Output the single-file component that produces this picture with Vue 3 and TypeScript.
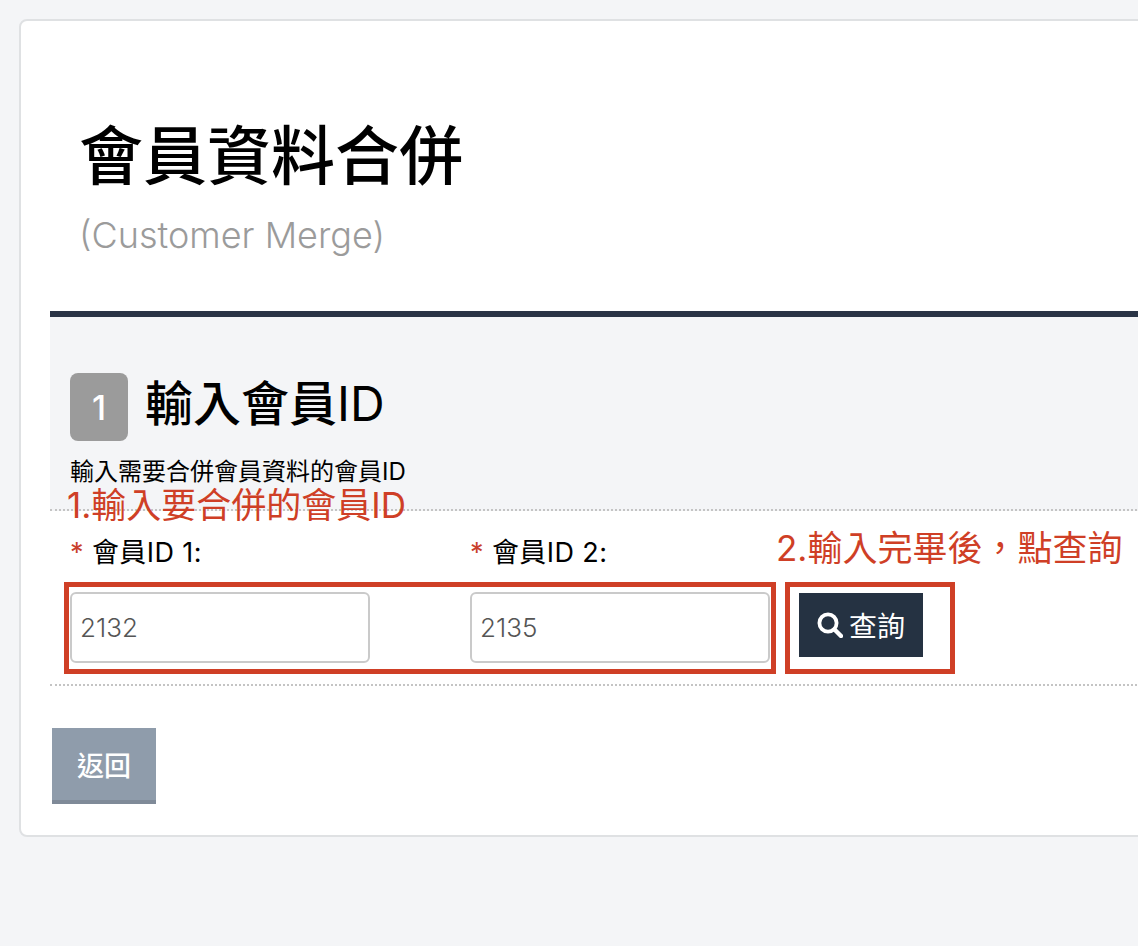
<script setup lang="ts">
const fields = [
  { label: '會員ID 1:', value: '2132' },
  { label: '會員ID 2:', value: '2135' },
]
</script>

<template>
  <div class="page">
    <main class="card">
      <header class="head">
        <h1>會員資料合併</h1>
        <p class="sub">(Customer Merge)</p>
      </header>

      <section class="panel">
        <div class="step">
          <span class="badge">1</span>
          <h2>輸入會員<span class="latin">ID</span></h2>
        </div>
        <p class="desc">輸入需要合併會員資料的會員ID</p>
        <span class="note note-one">1.輸入要合併的會員ID</span>
      </section>

      <form class="query" @submit.prevent>
        <div class="field" v-for="f in fields" :key="f.label">
          <label><i>*</i>{{ f.label }}</label>
          <input type="text" :value="f.value" />
        </div>
        <button class="search" type="button">
          <svg width="26" height="26" viewBox="0 0 26 26" aria-hidden="true">
            <circle cx="11" cy="11" r="8.6" fill="none" stroke="#fff" stroke-width="3.8" />
            <path d="M17.5 17.5 L24 24" stroke="#fff" stroke-width="4.4" stroke-linecap="round" />
          </svg>
          <span>查詢</span>
        </button>
        <span class="note note-two">2.輸入完畢後，點查詢</span>
        <span class="mark mark-one"></span>
        <span class="mark mark-two"></span>
      </form>

      <div class="actions">
        <button class="back" type="button">返回</button>
      </div>
    </main>
  </div>
</template>

<style scoped>
.page {
  min-height: 946px;
  box-sizing: border-box;
  padding: 19px 0 0 19px;
  overflow: hidden;
  font-family: Inter, "Noto Sans CJK TC", sans-serif;
  color: #000;
}
.card {
  box-sizing: border-box;
  width: 1200px;
  height: 818px;
  background: #fff;
  border: 2px solid #dfe1e3;
  border-radius: 8px;
  padding-left: 29px;
}
.head {
  height: 290px;
  box-sizing: border-box;
  padding: 100px 0 0 29px;
}
h1 {
  margin: 0;
  font-size: 64px;
  line-height: 70px;
  font-weight: 500;
}
.sub {
  margin: 19px 0 0;
  font-size: 36px;
  line-height: 50px;
  font-weight: 300;
  color: #9b9b9b;
}
.panel {
  position: relative;
  box-sizing: border-box;
  height: 200px;
  background: #f4f5f7;
  border-top: 6px solid #2a3446;
  border-bottom: 2px dotted #c4c4c4;
  padding: 56px 0 0 20px;
}
.step {
  display: flex;
  align-items: center;
  gap: 17px;
}
.badge {
  width: 58px;
  height: 68px;
  border-radius: 8px;
  background: #9b9b9b;
  color: #fff;
  font-size: 34px;
  font-weight: 500;
  display: flex;
  align-items: center;
  justify-content: center;
}
h2 {
  margin: 0 0 6px;
  font-size: 48px;
  line-height: 60px;
  font-weight: 500;
}
.latin {
  font-weight: 400;
}
.desc {
  margin: 16px 0 0;
  font-size: 24px;
  line-height: 30px;
}
.note {
  position: absolute;
  color: #cf3f26;
  white-space: nowrap;
}
.note-one {
  left: 17px;
  top: 168px;
  font-size: 35px;
  line-height: 40px;
}
.query {
  position: relative;
  box-sizing: border-box;
  height: 175px;
  border-bottom: 2px dotted #c4c4c4;
  display: flex;
  align-items: flex-start;
  padding: 23px 0 0 20px;
}
.field {
  width: 400px;
}
label {
  display: block;
  font-size: 27px;
  line-height: 38px;
  letter-spacing: 0.4px;
  margin-bottom: 20px;
}
label i {
  font-style: normal;
  color: #c9402c;
  margin: 0 8px 0 0;
}
input {
  display: block;
  box-sizing: border-box;
  width: 300px;
  height: 71px;
  border: 2px solid #cacaca;
  border-radius: 6px;
  padding: 0 8px;
  font: inherit;
  font-size: 26px;
  font-weight: 300;
  color: #555;
  background: #fff;
  outline: none;
}
.search {
  box-sizing: border-box;
  margin: 59px 0 0 -71px;
  width: 124px;
  height: 64px;
  border: 0;
  background: #253242;
  color: #fff;
  font: inherit;
  font-size: 28px;
  display: flex;
  align-items: center;
  justify-content: center;
  gap: 6px;
  padding: 0;
}
.note-two {
  left: 726px;
  top: 15px;
  font-size: 35px;
  line-height: 44px;
}
.mark {
  position: absolute;
  box-sizing: border-box;
  top: 71px;
  height: 92px;
  border: 5px solid #cf3f26;
}
.mark-one {
  left: 14px;
  width: 712px;
}
.mark-two {
  left: 735px;
  width: 170px;
}
.actions {
  padding: 42px 0 0 2px;
}
.back {
  box-sizing: border-box;
  display: block;
  width: 104px;
  height: 76px;
  border: 0;
  border-bottom: 4px solid #7f8a98;
  background: #8f9cab;
  color: #fff;
  font: inherit;
  font-size: 27px;
  font-weight: 500;
  padding: 0;
}
</style>

<style>
html, body {
  margin: 0;
  background: #f4f5f7;
  overflow: hidden;
}
</style>
